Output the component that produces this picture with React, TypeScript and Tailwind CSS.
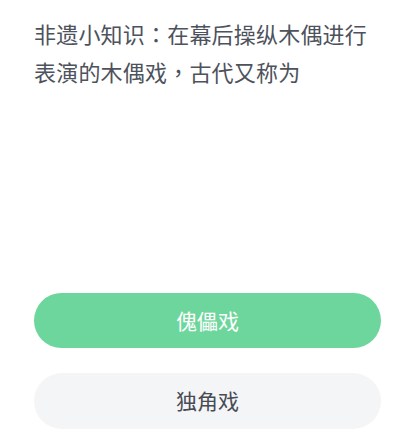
export default function App() {
  return (
    <div className="w-[400px] h-[436px] bg-white flex flex-col pl-[34px] pr-[19px] pt-[14px] font-['Noto_Sans_CJK_SC','Noto_Sans',sans-serif]">
      <p className="text-[22px] leading-[38px] text-[#4d525c] tracking-[0.2px]">
        非遗小知识<span className="font-['Noto_Sans_CJK_TC',sans-serif]">：</span>在幕后操纵木偶进行表演的木偶戏<span className="font-['Noto_Sans_CJK_TC',sans-serif]">，</span>古代又称为
      </p>
      <div className="mt-auto mb-[7px] flex flex-col gap-[25px]">
        <button className="h-[55px] w-full rounded-full bg-[#6dd69c] text-white text-[21px]">
          傀儡戏
        </button>
        <button className="h-[56px] w-full rounded-full bg-[#f4f5f7] text-[#474b53] text-[21px]">
          独角戏
        </button>
      </div>
    </div>
  )
}
